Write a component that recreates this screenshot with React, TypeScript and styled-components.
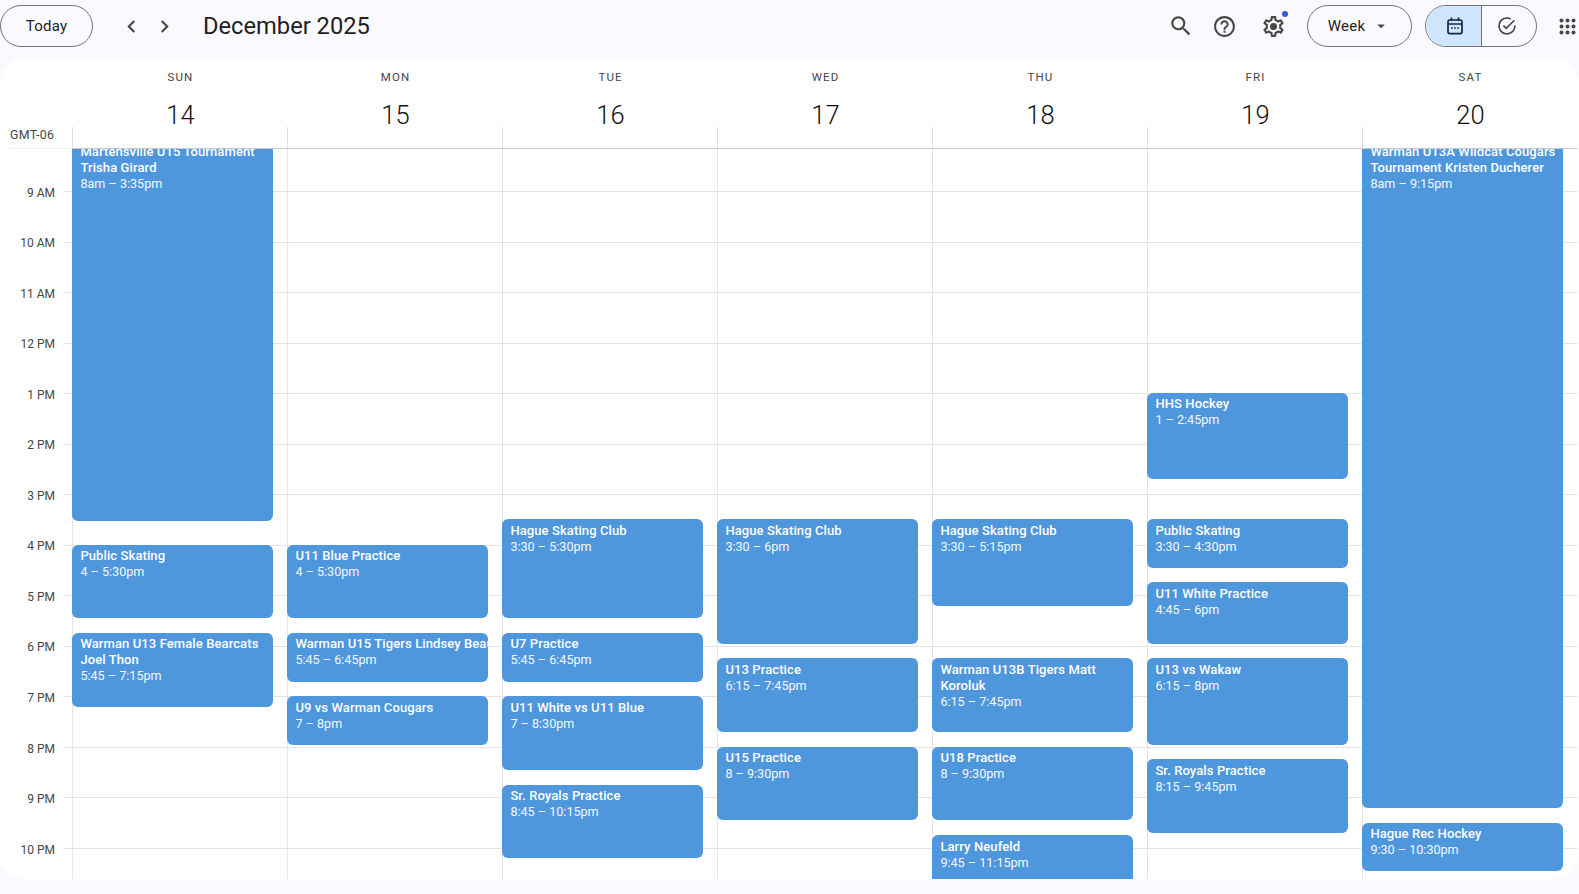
import React from 'react';
import styled, { createGlobalStyle } from 'styled-components';
import {
	MdSearch,
	MdHelpOutline,
	MdChevronLeft,
	MdChevronRight,
	MdArrowDropDown
} from 'react-icons/md';

const HOUR = 50.54;
// the scrolled body starts at 148.5px on screen, 9 AM sits at 191
const BODY_START_HOUR = 9 - (191 - 149) / HOUR;

interface CalEvent {
	title: string;
	time: string;
	start: number;
	end: number;
}

interface Day {
	name: string;
	date: number;
	events: CalEvent[];
}

const DAYS: Day[] = [
	{
		name: 'SUN',
		date: 14,
		events: [
			{ title: 'Martensville U15 Tournament Trisha Girard', time: '8am – 3:35pm', start: 8, end: 15.58 },
			{ title: 'Public Skating', time: '4 – 5:30pm', start: 16, end: 17.5 },
			{ title: 'Warman U13 Female Bearcats Joel Thon', time: '5:45 – 7:15pm', start: 17.75, end: 19.25 }
		]
	},
	{
		name: 'MON',
		date: 15,
		events: [
			{ title: 'U11 Blue Practice', time: '4 – 5:30pm', start: 16, end: 17.5 },
			{ title: 'Warman U15 Tigers Lindsey Beaulac', time: '5:45 – 6:45pm', start: 17.75, end: 18.75 },
			{ title: 'U9 vs Warman Cougars', time: '7 – 8pm', start: 19, end: 20 }
		]
	},
	{
		name: 'TUE',
		date: 16,
		events: [
			{ title: 'Hague Skating Club', time: '3:30 – 5:30pm', start: 15.5, end: 17.5 },
			{ title: 'U7 Practice', time: '5:45 – 6:45pm', start: 17.75, end: 18.75 },
			{ title: 'U11 White vs U11 Blue', time: '7 – 8:30pm', start: 19, end: 20.5 },
			{ title: 'Sr. Royals Practice', time: '8:45 – 10:15pm', start: 20.75, end: 22.25 }
		]
	},
	{
		name: 'WED',
		date: 17,
		events: [
			{ title: 'Hague Skating Club', time: '3:30 – 6pm', start: 15.5, end: 18 },
			{ title: 'U13 Practice', time: '6:15 – 7:45pm', start: 18.25, end: 19.75 },
			{ title: 'U15 Practice', time: '8 – 9:30pm', start: 20, end: 21.5 }
		]
	},
	{
		name: 'THU',
		date: 18,
		events: [
			{ title: 'Hague Skating Club', time: '3:30 – 5:15pm', start: 15.5, end: 17.25 },
			{ title: 'Warman U13B Tigers Matt Koroluk', time: '6:15 – 7:45pm', start: 18.25, end: 19.75 },
			{ title: 'U18 Practice', time: '8 – 9:30pm', start: 20, end: 21.5 },
			{ title: 'Larry Neufeld', time: '9:45 – 11:15pm', start: 21.75, end: 23.25 }
		]
	},
	{
		name: 'FRI',
		date: 19,
		events: [
			{ title: 'HHS Hockey', time: '1 – 2:45pm', start: 13, end: 14.75 },
			{ title: 'Public Skating', time: '3:30 – 4:30pm', start: 15.5, end: 16.5 },
			{ title: 'U11 White Practice', time: '4:45 – 6pm', start: 16.75, end: 18 },
			{ title: 'U13 vs Wakaw', time: '6:15 – 8pm', start: 18.25, end: 20 },
			{ title: 'Sr. Royals Practice', time: '8:15 – 9:45pm', start: 20.25, end: 21.75 }
		]
	},
	{
		name: 'SAT',
		date: 20,
		events: [
			{ title: 'Warman U13A Wildcat Cougars Tournament Kristen Ducherer', time: '8am – 9:15pm', start: 8, end: 21.25 },
			{ title: 'Hague Rec Hockey', time: '9:30 – 10:30pm', start: 21.5, end: 22.5 }
		]
	}
];

const HOURS = ['9 AM', '10 AM', '11 AM', '12 PM', '1 PM', '2 PM', '3 PM', '4 PM', '5 PM', '6 PM', '7 PM', '8 PM', '9 PM', '10 PM'];

const GlobalStyle = createGlobalStyle`
	html, body {
		margin: 0;
		height: 100%;
		overflow: hidden;
		background: #faf9fd;
		font-family: 'Roboto', 'Liberation Sans', sans-serif;
	}
`;

const Page = styled.div`
	display: flex;
	flex-direction: column;
	height: 894px;
`;

const Toolbar = styled.header`
	display: flex;
	align-items: center;
	height: 52px;
	padding-bottom: 7px;
	flex-shrink: 0;
`;

const PillButton = styled.button`
	display: flex;
	align-items: center;
	justify-content: center;
	height: 42px;
	padding: 0;
	border: 1px solid #747775;
	border-radius: 21px;
	background: transparent;
	color: #1f1f1f;
	font: 400 15px 'Roboto', sans-serif;
	letter-spacing: 0.2px;
`;

const TodayButton = styled(PillButton)`
	width: 93px;
	margin-right: 22px;
`;

const IconButton = styled.button<{ $width?: number }>`
	position: relative;
	display: flex;
	align-items: center;
	justify-content: center;
	width: ${(p) => p.$width ?? 33}px;
	height: 40px;
	padding: 0;
	border: none;
	background: none;
	color: #444746;
`;

const Title = styled.h1`
	margin: 0 0 0 22px;
	font: 400 23.7px 'Roboto', sans-serif;
	color: #1f1f1f;
`;

const ToolbarRight = styled.div`
	display: flex;
	align-items: center;
	margin-left: auto;
`;

const ActionIcons = styled.div`
	display: flex;
	align-items: center;
	gap: 3.5px;
	margin-right: 14px;
`;

const GearButton = styled(IconButton)`
	margin-left: 5.5px;
`;

const NotifyDot = styled.span`
	position: absolute;
	top: 5px;
	right: 5px;
	width: 6px;
	height: 6px;
	border-radius: 50%;
	background: #2f5cd8;
`;

const ViewButton = styled(PillButton)`
	width: 105px;
	gap: 7px;
	margin-right: 13px;
	padding-right: 1px;
`;

const ModeToggle = styled.div`
	display: flex;
	width: 112px;
	height: 42px;
	box-sizing: border-box;
	border: 1px solid #747775;
	border-radius: 21px;
	overflow: hidden;
`;

const ModeSegment = styled.div<{ $active?: boolean }>`
	display: flex;
	flex: ${(p) => (p.$active ? '0 0 56px' : '1')};
	align-items: center;
	justify-content: center;
	box-sizing: border-box;
	padding: ${(p) => (p.$active ? '0 0 0 3px' : '0 4px 0 0')};
	background: ${(p) => (p.$active ? '#cfe5fc' : 'transparent')};
	color: ${(p) => (p.$active ? '#0b2a4a' : '#444746')};
	border-right: ${(p) => (p.$active ? '1px solid #747775' : 'none')};
`;

const AppsButton = styled(IconButton)`
	margin-left: 15px;
	margin-right: -3px;
`;

const Panel = styled.main`
	display: flex;
	flex-direction: column;
	flex: 1;
	min-height: 0;
	margin-right: 1px;
	margin-bottom: 15px;
	border-radius: 24px;
	background: #fff;
	overflow: hidden;
`;

const HeaderGrid = styled.div`
	display: grid;
	grid-template-columns: 72px repeat(7, 215px);
	height: 90px;
	flex-shrink: 0;
`;

const GmtLabel = styled.div`
	align-self: end;
	margin-left: 10px;
	padding-bottom: 6px;
	border-bottom: 1px solid #efeff2;
	font-size: 12.4px;
	letter-spacing: 0.3px;
	line-height: 14px;
	white-space: nowrap;
	color: #444746;
`;

const DayHead = styled.div`
	position: relative;
	display: flex;
	flex-direction: column;
	align-items: center;
	box-sizing: border-box;
	padding: 11px 0 0 2px;
	border-bottom: 1px solid #c9c9cd;
`;

const DayName = styled.div`
	font-size: 11.5px;
	letter-spacing: 1.1px;
	line-height: 14px;
	color: #444746;
`;

const DayNumber = styled.div`
	margin-top: 15px;
	font-size: 25.5px;
	font-weight: 300;
	line-height: 32px;
	color: #111;
`;

const HeadStub = styled.span`
	position: absolute;
	left: 0;
	bottom: 0;
	height: 21px;
	width: 1px;
	background: #dfdfe4;
`;

const Body = styled.div`
	display: grid;
	grid-template-columns: 72px repeat(7, 215px);
	flex: 1;
	min-height: 0;
	overflow: hidden;
`;

const TimeGutter = styled.div`
	padding-top: 42px;
	box-sizing: border-box;
`;

const TimeRow = styled.div`
	position: relative;
	height: ${HOUR}px;
	box-sizing: border-box;
	margin-left: 64px;
	border-top: 1px solid #e3e3e8;
`;

const TimeLabel = styled.span`
	position: absolute;
	right: 17px;
	top: -7.3px;
	font-size: 12px;
	line-height: 16px;
	white-space: nowrap;
	color: #444746;
`;

const DayColumn = styled.div`
	position: relative;
	box-sizing: border-box;
	padding-top: 42px;
	border-left: 1px solid #e3e3e8;
`;

const HourLine = styled.div`
	height: ${HOUR}px;
	box-sizing: border-box;
	border-top: 1px solid #e3e3e8;
`;

const EventCard = styled.div`
	position: absolute;
	left: -1px;
	width: 201px;
	box-sizing: border-box;
	padding: 3.4px 0 0 8.4px;
	border-radius: 6px;
	background: #4f97dd;
	color: #fff;
	overflow: hidden;
`;

const EventTitle = styled.div`
	font-size: 13px;
	font-weight: 500;
	letter-spacing: 0.1px;
	line-height: 16px;
`;

const NoWrapTitle = styled(EventTitle)`
	white-space: nowrap;
`;

const EventTime = styled.div`
	font-size: 12.6px;
	line-height: 15.6px;
	white-space: nowrap;
	color: #f2f7fd;
`;

function GearIcon() {
	return (
		<svg width='25' height='25' viewBox='0 0 24 24' fill='currentColor'>
			<path d='M19.43 12.98c.04-.32.07-.64.07-.98 0-.34-.03-.66-.07-.98l2.11-1.65c.19-.15.24-.42.12-.64l-2-3.46c-.09-.16-.26-.25-.44-.25-.06 0-.12.01-.17.03l-2.49 1c-.52-.4-1.08-.73-1.69-.98l-.38-2.65C14.46 2.18 14.25 2 14 2h-4c-.25 0-.46.18-.49.42l-.38 2.65c-.61.25-1.17.59-1.69.98l-2.49-1c-.06-.02-.12-.03-.18-.03-.17 0-.34.09-.43.25l-2 3.46c-.13.22-.07.49.12.64l2.11 1.65c-.04.32-.07.65-.07.98 0 .33.03.66.07.98l-2.11 1.65c-.19.15-.24.42-.12.64l2 3.46c.09.16.26.25.44.25.06 0 .12-.01.17-.03l2.49-1c.52.4 1.08.73 1.69.98l.38 2.65c.03.24.24.42.49.42h4c.25 0 .46-.18.49-.42l.38-2.65c.61-.25 1.17-.59 1.69-.98l2.49 1c.06.02.12.03.18.03.17 0 .34-.09.43-.25l2-3.46c.12-.22.07-.49-.12-.64l-2.11-1.65zm-1.98-1.71c.04.31.05.52.05.73 0 .21-.02.43-.05.73l-.14 1.13.89.7 1.08.84-.7 1.21-1.27-.51-1.04-.42-.9.68c-.43.32-.84.56-1.25.73l-1.06.43-.16 1.13-.2 1.35h-1.4l-.19-1.35-.16-1.13-1.06-.43c-.43-.18-.83-.41-1.23-.71l-.91-.7-1.06.43-1.27.51-.7-1.21 1.08-.84.89-.7-.14-1.13c-.03-.31-.05-.54-.05-.74s.02-.43.05-.73l.14-1.13-.89-.7-1.08-.84.7-1.21 1.27.51 1.04.42.9-.68c.43-.32.84-.56 1.25-.73l1.06-.43.16-1.13.2-1.35h1.39l.19 1.35.16 1.13 1.06.43c.43.18.83.41 1.23.71l.91.7 1.06-.43 1.27-.51.7 1.21-1.07.85-.89.7.14 1.13z' />
			<circle cx='12' cy='12' r='3.4' />
		</svg>
	);
}

function CalendarIcon() {
	return (
		<svg width='20' height='20' viewBox='0 0 20 20' fill='none' stroke='currentColor' strokeWidth='1.7'>
			<rect x='3' y='4' width='14' height='13.6' rx='1.8' />
			<path d='M3 8h14M6.5 1.4v3.4M13.5 1.4v3.4' />
			<path d='M6.2 12h1.6M9.2 12h1.6M12.2 12h1.6' strokeWidth='1.4' />
		</svg>
	);
}

function TaskIcon() {
	return (
		<svg width='20' height='20' viewBox='0 0 20 20' fill='none' stroke='currentColor' strokeWidth='1.6'>
			<path d='M17.8 9.4A7.9 7.9 0 1 1 13.8 3.1' />
			<path d='M6.4 9.6l2.8 2.8 8.2-8.2' />
		</svg>
	);
}

function AppsIcon() {
	const spots = [2.5, 8.5, 14.5];
	return (
		<svg width='17' height='17' viewBox='0 0 17 17' fill='currentColor'>
			{spots.map((y) => spots.map((x) => <circle key={`${x}-${y}`} cx={x} cy={y} r='2' />))}
		</svg>
	);
}

function App() {
	return (
		<Page>
			<GlobalStyle />
			<Toolbar>
				<TodayButton>Today</TodayButton>
				<IconButton>
					<MdChevronLeft size={25} />
				</IconButton>
				<IconButton>
					<MdChevronRight size={25} />
				</IconButton>
				<Title>December 2025</Title>
				<ToolbarRight>
					<ActionIcons>
						<IconButton $width={40}>
							<MdSearch size={26} />
						</IconButton>
						<IconButton $width={40}>
							<MdHelpOutline size={25} />
						</IconButton>
						<GearButton $width={40}>
							<GearIcon />
							<NotifyDot />
						</GearButton>
					</ActionIcons>
					<ViewButton>
						Week
						<MdArrowDropDown size={18} color='#444746' />
					</ViewButton>
					<ModeToggle>
						<ModeSegment $active>
							<CalendarIcon />
						</ModeSegment>
						<ModeSegment>
							<TaskIcon />
						</ModeSegment>
					</ModeToggle>
					<AppsButton $width={30}>
						<AppsIcon />
					</AppsButton>
				</ToolbarRight>
			</Toolbar>
			<Panel>
				<HeaderGrid>
					<GmtLabel>GMT-06</GmtLabel>
					{DAYS.map((d) => (
						<DayHead key={d.name}>
							<DayName>{d.name}</DayName>
							<DayNumber>{d.date}</DayNumber>
							<HeadStub />
						</DayHead>
					))}
				</HeaderGrid>
				<Body>
					<TimeGutter>
						{HOURS.map((h) => (
							<TimeRow key={h}>
								<TimeLabel>{h}</TimeLabel>
							</TimeRow>
						))}
					</TimeGutter>
					{DAYS.map((d) => (
						<DayColumn key={d.name}>
							{HOURS.map((h) => (
								<HourLine key={h} />
							))}
							{d.events.map((ev) => {
								const Heading = ev.title.startsWith('Warman U15') ? NoWrapTitle : EventTitle;
								return (
									<EventCard
										key={ev.title}
										style={{
											top: (ev.start - BODY_START_HOUR) * HOUR - 0.25,
											height: (ev.end - ev.start) * HOUR - 2
										}}
									>
										<Heading>{ev.title}</Heading>
										<EventTime>{ev.time}</EventTime>
									</EventCard>
								);
							})}
						</DayColumn>
					))}
				</Body>
			</Panel>
		</Page>
	);
}

export default App;
